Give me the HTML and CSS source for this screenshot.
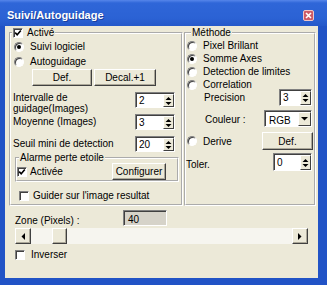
FILE: index.html
```html
<!doctype html>
<html lang="fr">

<head>
  <meta charset="utf-8">
  <title>Suivi/Autoguidage</title>
  <link rel="stylesheet" href="styles.css">
</head>

<body>
  <div class="window">
    <div class="titlebar">
      <span class="title">Suivi/Autoguidage</span>
      <span class="close">
        <svg width="7" height="7" viewBox="0 0 7 7"><path d="M1 1l5 5M6 1l-5 5" stroke="#fff" stroke-width="1.6"/></svg>
      </span>
    </div>

    <div class="client">
      <div class="groups">
        <!-- left group: software guiding -->
        <fieldset class="group group-suivi">
          <legend class="lg-suivi">
            <span class="check on"><svg viewBox="0 0 8 8"><path d="M1.2 3.6 3.2 5.8 6.8 1.6"/></svg></span>Activé
          </legend>
          <div class="opt opt-first"><span class="radio on"></span>Suivi logiciel</div>
          <div class="opt opt-next"><span class="radio"></span>Autoguidage</div>
          <div class="btn-row">
            <span class="btn btn-def">Def.</span>
            <span class="btn btn-decal">Decal.+1</span>
          </div>
          <div class="field field-interval">
            <span class="label">Intervalle de<br>guidage(Images)</span>
            <span class="spin"><span class="spin-in"><span class="val">2</span><span class="arrows"><svg width="7" height="10" viewBox="0 0 7 10"><path d="M3.5 1 6.5 4H0.5ZM0.5 6H6.5L3.5 9Z"/></svg></span></span></span>
          </div>
          <div class="field field-moy">
            <span class="label">Moyenne (Images)</span>
            <span class="spin"><span class="spin-in"><span class="val">3</span><span class="arrows"><svg width="7" height="10" viewBox="0 0 7 10"><path d="M3.5 1 6.5 4H0.5ZM0.5 6H6.5L3.5 9Z"/></svg></span></span></span>
          </div>
          <div class="field field-seuil">
            <span class="label">Seuil mini de detection</span>
            <span class="spin"><span class="spin-in"><span class="val">20</span><span class="arrows"><svg width="7" height="10" viewBox="0 0 7 10"><path d="M3.5 1 6.5 4H0.5ZM0.5 6H6.5L3.5 9Z"/></svg></span></span></span>
          </div>

          <fieldset class="group alarm">
            <legend class="lg-alarm">Alarme perte etoile</legend>
            <div class="alarm-row">
              <span class="check on"><svg viewBox="0 0 8 8"><path d="M1.2 3.6 3.2 5.8 6.8 1.6"/></svg></span>Activée
              <span class="btn btn-config">Configurer</span>
            </div>
          </fieldset>

          <div class="opt opt-guider"><span class="check"></span>Guider sur l'image resultat</div>
        </fieldset>

        <!-- right group: method -->
        <fieldset class="group group-methode">
          <legend class="lg-methode">Méthode</legend>
          <div class="opt"><span class="radio"></span>Pixel Brillant</div>
          <div class="opt"><span class="radio on"></span>Somme Axes</div>
          <div class="opt"><span class="radio"></span>Detection de limites</div>
          <div class="opt"><span class="radio"></span>Correlation</div>
          <div class="mrow mrow-precision">
            <span class="label">Precision</span>
            <span class="spin"><span class="spin-in"><span class="val">3</span><span class="arrows"><svg width="7" height="10" viewBox="0 0 7 10"><path d="M3.5 1 6.5 4H0.5ZM0.5 6H6.5L3.5 9Z"/></svg></span></span></span>
          </div>
          <div class="mrow mrow-couleur">
            <span class="label">Couleur :</span>
            <span class="spin combo"><span class="spin-in"><span class="val">RGB</span><span class="drop"><svg width="7" height="4" viewBox="0 0 7 4"><path d="M0 0H7L3.5 3.5Z"/></svg></span></span></span>
          </div>
          <div class="mrow mrow-derive">
            <span class="radio"></span>Derive
            <span class="btn btn-def2">Def.</span>
          </div>
          <div class="mrow mrow-toler">
            <span class="label">Toler.</span>
            <span class="spin"><span class="spin-in"><span class="val">0</span><span class="arrows"><svg width="7" height="10" viewBox="0 0 7 10"><path d="M3.5 1 6.5 4H0.5ZM0.5 6H6.5L3.5 9Z"/></svg></span></span></span>
          </div>
        </fieldset>
      </div>

      <div class="zone">
        <span class="label">Zone (Pixels) :</span>
        <span class="readonly">40</span>
      </div>

      <div class="scrollbar">
        <span class="sb-btn"><svg width="4" height="7" viewBox="0 0 4 7"><path d="M4 0V7L0.5 3.5Z"/></svg></span>
        <span class="sb-track"><span class="sb-thumb"></span></span>
        <span class="sb-btn"><svg width="4" height="7" viewBox="0 0 4 7"><path d="M0 0V7L3.5 3.5Z"/></svg></span>
      </div>

      <div class="opt opt-inverser"><span class="check"></span>Inverser</div>
    </div>
  </div>
</body>

</html>
```

FILE: styles.css
```css
html, body { margin:0; padding:0; }
body { background:#fff; font-family:"Liberation Sans", Arial, sans-serif; font-size:10px; color:#000; }

/* window frame */
.window { width:327px; height:285px; background:#2153c6; display:flex; flex-direction:column; }
.titlebar { height:26px; flex:none; display:flex; align-items:flex-start; background:linear-gradient(#5686ea 0, #2f66d8 3px, #2b62d4 18px, #2458c9 26px); }
.title { padding:9px 0 0 7px; font:bold 11px/12px "Liberation Sans", Arial, sans-serif; color:#fff; text-shadow:1px 1px 0 #1a3f9c; }
.close { margin:10px 13px 0 auto; width:11px; height:11px; box-sizing:border-box; border:1px solid #f0c6c6; border-radius:2px; background:#cd5a66; display:flex; align-items:center; justify-content:center; }
.close svg { display:block; }
.client { margin:0 9px 0 5px; height:252px; background:#ece9d8; }

/* group boxes */
.groups { display:flex; gap:1px; padding:1px 2px 0 4px; }
.group { margin:0; padding:0 0 2px; border:2px groove #fff; box-sizing:border-box; min-width:0; }
.group legend { display:flex; align-items:center; height:12px; line-height:12px; padding:0 1px; }
.group-suivi { width:174px; }
.group-methode { width:132px; }
.lg-suivi { margin-left:1px; padding-right:2px; }
.lg-suivi .check { margin-right:4px; }
.lg-methode { margin-left:5px; }

/* checkbox / radio */
.check, .radio { flex:none; width:10px; height:10px; box-sizing:border-box; border:1px solid; border-color:#808080 #fff #fff #808080; box-shadow:inset 1px 1px 0 #404040; background:#fff; }
.check svg { display:block; width:8px; height:8px; fill:none; stroke:#000; stroke-width:1.6; }
.radio { border-radius:50%; display:flex; align-items:center; justify-content:center; }
.radio.on::after { content:""; width:4px; height:4px; border-radius:50%; background:#000; }

.opt { display:flex; align-items:center; height:13px; line-height:11px; }
.opt .radio { margin:0 6px 0 1px; }
.group-suivi > .opt .radio { margin-left:3px; }
.opt-first { margin-top:1px; }
.opt-next { margin-top:2px; }
.opt-guider { margin-top:7px; }
.opt-guider .check { margin:0 4px 0 8px; }

/* buttons */
.btn { display:flex; align-items:center; justify-content:center; box-sizing:border-box; height:17px; border:1px solid; border-color:#fff #404040 #404040 #fff; box-shadow:inset -1px -1px 0 #aca899; background:#ece9d8; }
.btn-row { display:flex; gap:2px; margin:1px 0 0 21px; }
.btn-def { width:60px; }
.btn-decal { width:62px; }

/* labelled spinners */
.field { display:flex; margin-left:2px; }
.label { line-height:11px; }
.field .label { width:122px; padding-top:2px; }
.field-interval { margin-top:6px; }
.field-interval .label { padding-top:0; }
.field-seuil { margin-top:6px; }

.spin { flex:none; display:flex; box-sizing:border-box; width:40px; height:16px; border:1px solid; border-color:#808080 #fff #fff #808080; background:#fff; }
.spin-in { flex:1; display:flex; border-top:1px solid #404040; border-left:1px solid #404040; }
.val { flex:1; line-height:11px; padding:1px 0 0 2px; }
.arrows, .drop { flex:none; width:11px; box-sizing:border-box; display:flex; align-items:center; justify-content:center; border:1px solid; border-color:#fff #404040 #404040 #fff; background:#ece9d8; }
.drop { width:13px; }
.arrows svg, .drop svg, .sb-btn svg { display:block; }

.alarm { margin-left:4px; width:164px; padding:0; }
.lg-alarm { margin-left:2px; }
.alarm-row { display:flex; align-items:center; height:17px; margin-top:-1px; }
.alarm-row .check { margin-right:3px; }
.btn-config { width:54px; margin:0 11px 0 auto; }

/* method column */
.mrow { display:flex; }
.mrow .spin { margin:0 2px 0 auto; }
.mrow-precision { margin-top:-2px; }
.mrow-precision .label { padding:3px 0 0 18px; }
.mrow-precision .spin { width:33px; height:17px; }
.mrow-couleur { margin-top:4px; }
.mrow-couleur .label { padding:4px 0 0 19px; }
.combo { width:48px; height:17px; }
.combo .val { padding:3px 0 0 3px; }
.mrow-derive { margin-top:5px; align-items:center; line-height:11px; }
.mrow-derive .radio { margin:0 6px 0 1px; }
.btn-def2 { width:51px; height:18px; margin:0 1px 0 auto; }
.mrow-toler { margin-top:3px; }
.mrow-toler .label { padding-top:6px; }
.mrow-toler .spin { width:39px; height:18px; }
.mrow-toler .val { padding-top:2px; }

/* zone, slider, invert */
.zone { display:flex; margin:4px 0 0 10px; }
.zone .label { width:108px; padding-top:5px; }
.readonly { width:44px; height:16px; box-sizing:border-box; border:1px solid; border-color:#808080 #fff #fff #808080; box-shadow:inset 1px 1px 0 #404040; background:#d6d3c9; line-height:11px; padding:3px 0 0 4px; }

.scrollbar { display:flex; width:293px; height:16px; margin:2px 0 0 10px; }
.sb-btn { flex:none; width:16px; box-sizing:border-box; display:flex; align-items:center; justify-content:center; border:1px solid; border-color:#fff #404040 #404040 #fff; box-shadow:inset -1px -1px 0 #aca899; background:#ece9d8; }
.sb-track { flex:1; background:#f6f5ef; display:flex; }
.sb-thumb { width:15px; margin-left:21px; box-sizing:border-box; border:1px solid; border-color:#fff #404040 #404040 #fff; box-shadow:inset -1px -1px 0 #aca899; background:#ece9d8; }

.opt-inverser { margin-top:4px; }
.opt-inverser .check { margin:0 6px 0 10px; }
```
